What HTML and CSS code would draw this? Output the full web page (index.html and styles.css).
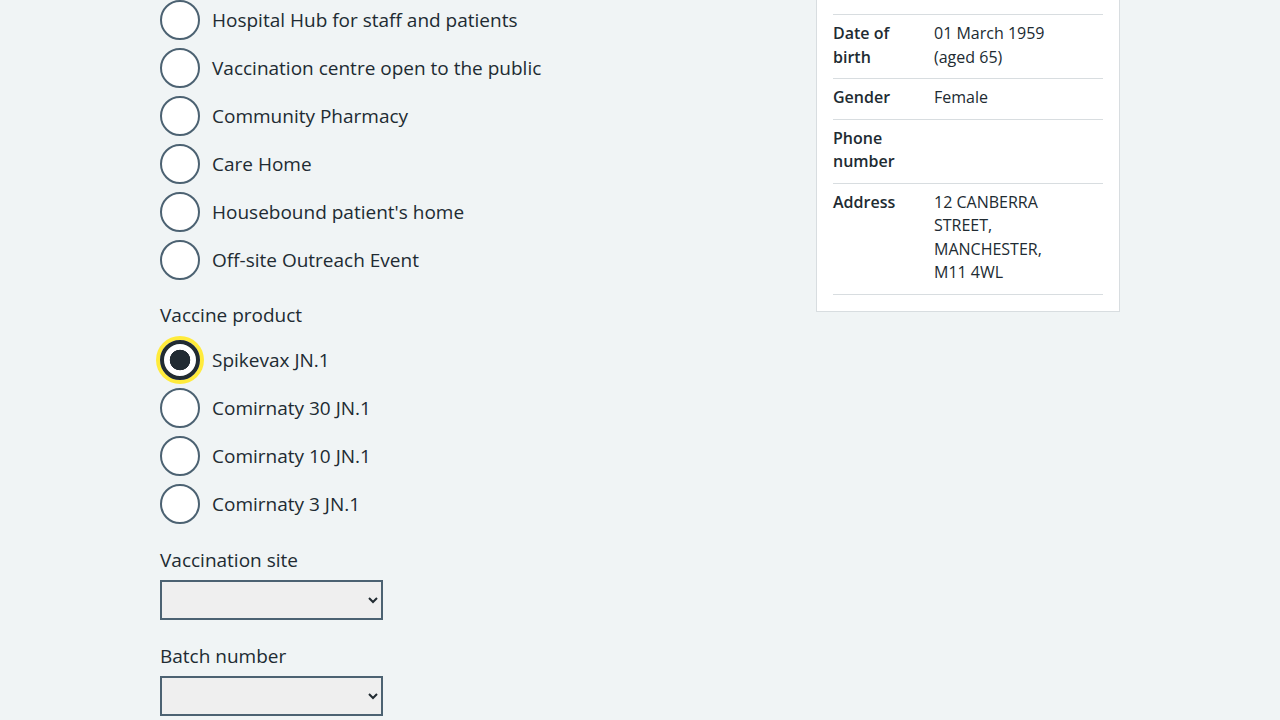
FILE: index.html
```html
<!DOCTYPE html>
<html lang="en">
<head>
<meta charset="utf-8">
<title>Record vaccination</title>
<link rel="stylesheet" href="styles.css">
</head>
<body>
<div class="container">
  <div class="layout">
    <div class="form-col">
      <div class="form-group">
        <div class="radios">
          <div class="radio-item"><input class="radio-input" type="radio" name="location" id="loc1"><label class="radio-label" for="loc1">Hospital Hub for staff and patients</label></div>
          <div class="radio-item"><input class="radio-input" type="radio" name="location" id="loc2"><label class="radio-label" for="loc2">Vaccination centre open to the public</label></div>
          <div class="radio-item"><input class="radio-input" type="radio" name="location" id="loc3"><label class="radio-label" for="loc3">Community Pharmacy</label></div>
          <div class="radio-item"><input class="radio-input" type="radio" name="location" id="loc4"><label class="radio-label" for="loc4">Care Home</label></div>
          <div class="radio-item"><input class="radio-input" type="radio" name="location" id="loc5"><label class="radio-label" for="loc5">Housebound patient's home</label></div>
          <div class="radio-item"><input class="radio-input" type="radio" name="location" id="loc6"><label class="radio-label" for="loc6">Off-site Outreach Event</label></div>
        </div>
      </div>

      <fieldset class="form-group fieldset">
        <legend class="legend">Vaccine product</legend>
        <div class="radios">
          <div class="radio-item"><input class="radio-input is-focused" type="radio" name="product" id="prod1" checked><label class="radio-label" for="prod1">Spikevax JN.1</label></div>
          <div class="radio-item"><input class="radio-input" type="radio" name="product" id="prod2"><label class="radio-label" for="prod2">Comirnaty 30 JN.1</label></div>
          <div class="radio-item"><input class="radio-input" type="radio" name="product" id="prod3"><label class="radio-label" for="prod3">Comirnaty 10 JN.1</label></div>
          <div class="radio-item"><input class="radio-input" type="radio" name="product" id="prod4"><label class="radio-label" for="prod4">Comirnaty 3 JN.1</label></div>
        </div>
      </fieldset>

      <div class="form-group">
        <label class="label" for="site">Vaccination site</label>
        <select class="select" id="site"><option></option></select>
      </div>

      <div class="form-group">
        <label class="label" for="batch">Batch number</label>
        <select class="select" id="batch"><option></option></select>
      </div>
    </div>

    <aside class="panel">
      <dl class="summary">
        <div class="summary-row">
          <dt class="summary-key">Date of birth</dt>
          <dd class="summary-value">01 March 1959 (aged 65)</dd>
        </div>
        <div class="summary-row">
          <dt class="summary-key">Gender</dt>
          <dd class="summary-value">Female</dd>
        </div>
        <div class="summary-row">
          <dt class="summary-key">Phone number</dt>
          <dd class="summary-value"></dd>
        </div>
        <div class="summary-row">
          <dt class="summary-key">Address</dt>
          <dd class="summary-value">12 CANBERRA STREET, MANCHESTER, M11 4WL</dd>
        </div>
      </dl>
    </aside>
  </div>
</div>
</body>
</html>
```

FILE: styles.css
```css
html, body {
  margin: 0;
  padding: 0;
}

body {
  background: #f0f4f5;
  color: #212b32;
  font-family: "Open Sans", "Noto Sans", "Liberation Sans", sans-serif;
  font-size: 19px;
  line-height: 28px;
}

.container {
  max-width: 960px;
  margin: 0 auto;
}

.layout {
  display: grid;
  grid-template-columns: 1fr 304px;
  column-gap: 16px;
  align-items: start;
}

.form-group {
  margin: 0 0 24px;
}

.fieldset {
  border: 0;
  padding: 0;
  min-width: 0;
}

.legend {
  padding: 0;
  margin: 0 0 14px;
  font-size: 19px;
  line-height: 22px;
}

.radios {
  display: flex;
  flex-direction: column;
  gap: 8px;
}

.radio-item {
  display: flex;
  align-items: center;
  gap: 12px;
}

.radio-input {
  appearance: none;
  -webkit-appearance: none;
  box-sizing: border-box;
  flex: none;
  margin: 0;
  width: 40px;
  height: 40px;
  border: 2px solid #4c6272;
  border-radius: 50%;
  background: #ffffff;
}

.radio-input:checked {
  border: 4px solid #212b32;
  background: radial-gradient(circle, #212b32 0 10px, #ffffff 10.6px);
}

.radio-input.is-focused {
  box-shadow: 0 0 0 4px #ffeb3b;
}

.radio-label {
  font-size: 19px;
  line-height: 28px;
}

.label {
  display: block;
  margin: 0 0 8px;
  font-size: 19px;
  line-height: 24px;
}

.select {
  display: block;
  box-sizing: border-box;
  width: 223px;
  height: 40px;
  margin: 0;
  padding: 4px 8px;
  border: 2px solid #4c6272;
  border-radius: 0;
  background-color: #efefef;
  color: #212b32;
  font-family: inherit;
  font-size: 19px;
}

.panel {
  background: #ffffff;
  border: 1px solid #d8dde0;
  border-top: 0;
  padding: 14px 16px 16px;
}

.summary {
  margin: 0;
  font-size: 16px;
  line-height: 23.5px;
}

.summary-row {
  display: grid;
  grid-template-columns: 101px 130px;
  padding: 7px 0 9px;
  border-bottom: 1px solid #d8dde0;
}

.summary-row:first-child {
  border-top: 1px solid #d8dde0;
}

.summary-key {
  margin: 0;
  padding-right: 24px;
  font-weight: 600;
}

.summary-value {
  margin: 0;
}
```
